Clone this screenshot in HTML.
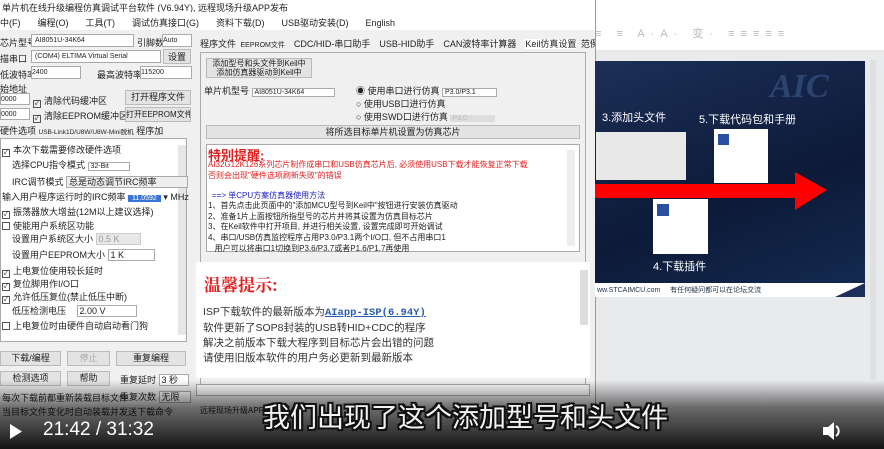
<!DOCTYPE html>
<html><head><meta charset="utf-8"><style>
*{margin:0;padding:0;box-sizing:border-box}
body{width:884px;height:449px;overflow:hidden;position:relative;background:#f0f0f0;font-family:"Liberation Sans","Noto Sans CJK SC",sans-serif;font-size:9px;color:#222}
.a{position:absolute;white-space:nowrap}
.bx{position:absolute;border:1px solid #aaa;background:#fff;white-space:nowrap;overflow:hidden;line-height:11px}
.btn{position:absolute;border:1px solid #bbb;background:#e3e3e3;text-align:center;white-space:nowrap;overflow:hidden}
.cb{display:inline-block;width:8px;height:8px;border:1px solid #555;margin-right:3px;vertical-align:-1px;font-size:7px;line-height:6px;text-align:center}
.red{color:#e02020}
</style></head><body>
<!-- left app -->
<div class="a" style="left:0;top:0;width:595px;height:12px;background:#fff"></div>
<div class="a" style="left:2px;top:1px;font-size:9px">单片机在线升级编程仿真调试平台软件 (V6.94Y), 远程现场升级APP发布</div>
<div class="a" style="left:0;top:12px;width:595px;height:18px;background:#fff"></div>
<div class="a" style="left:0;top:16px;font-size:9px;word-spacing:6px">中(F) &nbsp;编程(O) &nbsp;工具(T) &nbsp;调试仿真接口(G) &nbsp;资料下载(D) &nbsp;USB驱动安装(D) &nbsp;English</div>
<div class="a" style="left:0;top:36px">芯片型号</div>
<div class="bx" style="left:31px;top:34px;width:103px;height:13px;padding-left:3px;font-size:7px">AI8051U-34K64</div>
<div class="a" style="left:137px;top:36px">引脚数</div><div class="bx" style="left:162px;top:34px;width:30px;height:13px;font-size:7px">Auto</div>
<div class="a" style="left:0;top:52px">描串口</div>
<div class="bx" style="left:31px;top:50px;width:130px;height:13px;font-size:7px;padding-left:3px">(COM4) ELTIMA Virtual Serial</div>
<div class="btn" style="left:163px;top:49px;width:28px;height:15px">设置</div>
<div class="a" style="left:0;top:68px">低波特率</div><div class="bx" style="left:31px;top:66px;width:50px;height:13px;font-size:7px">2400</div>
<div class="a" style="left:97px;top:68px">最高波特率</div><div class="bx" style="left:140px;top:66px;width:52px;height:13px;font-size:7px">115200</div>
<div class="a" style="left:0;top:82px">始地址</div>
<div class="bx" style="left:0;top:93px;width:30px;height:12px;font-size:7px">0000</div>
<div class="a" style="left:33px;top:94px"><span class="cb">✓</span>清除代码缓冲区</div>
<div class="bx" style="left:0;top:108px;width:30px;height:12px;font-size:7px">0000</div>
<div class="a" style="left:33px;top:109px"><span class="cb">✓</span>清除EEPROM缓冲区</div>
<div class="btn" style="left:125px;top:90px;width:66px;height:15px;line-height:13px">打开程序文件</div>
<div class="btn" style="left:125px;top:107px;width:66px;height:15px;line-height:13px;font-size:8px">打开EEPROM文件</div>
<div class="a" style="left:0;top:124px">硬件选项 <span style="font-size:6.5px">USB-Link1D/U8W/U8W-Mini脱机</span> 程序加</div>
<div class="bx" style="left:0;top:138px;width:187px;height:204px"></div>
<div class="a" style="left:178px;top:145px;width:8px;height:190px;background:#e6e6e6"></div>
<div class="a" style="left:2px;top:143px"><span class="cb">✓</span>本次下载需要修改硬件选项</div>
<div class="a" style="left:12px;top:158px">选择CPU指令模式 <span style="border:1px solid #aaa;padding:0 20px 0 2px;font-size:7px">32-Bit</span></div>
<div class="a" style="left:12px;top:175px">IRC调节模式 <span style="border:1px solid #aaa;padding:0 30px 0 2px;background:#eee">总是动态调节IRC频率</span></div>
<div class="a" style="left:2px;top:190px">输入用户程序运行时的IRC频率 <span style="background:#3875d7;color:#fff;padding:0 4px;font-size:7px">11.0592</span> ▾ MHz</div>
<div class="a" style="left:2px;top:205px"><span class="cb">✓</span>振荡器放大增益(12M以上建议选择)</div>
<div class="a" style="left:2px;top:219px"><span class="cb"></span>使能用户系统区功能</div>
<div class="a" style="left:12px;top:232px">设置用户系统区大小 <span style="border:1px solid #ccc;background:#e8e8e8;padding:0 20px 0 2px;color:#999">0.5 K</span></div>
<div class="a" style="left:12px;top:248px">设置用户EEPROM大小 <span style="border:1px solid #aaa;padding:0 30px 0 2px">1 K</span></div>
<div class="a" style="left:2px;top:264px"><span class="cb">✓</span>上电复位使用较长延时</div>
<div class="a" style="left:2px;top:277px"><span class="cb">✓</span>复位脚用作I/O口</div>
<div class="a" style="left:2px;top:290px"><span class="cb">✓</span>允许低压复位(禁止低压中断)</div>
<div class="a" style="left:12px;top:304px">低压检测电压 <span style="border:1px solid #aaa;padding:0 30px 0 2px;margin-left:8px">2.00 V</span></div>
<div class="a" style="left:2px;top:319px"><span class="cb"></span>上电复位时由硬件自动启动看门狗</div>
<div class="btn" style="left:0;top:351px;width:61px;height:15px;line-height:13px">下载/编程</div>
<div class="btn" style="left:67px;top:351px;width:43px;height:15px;line-height:13px;color:#aaa">停止</div>
<div class="btn" style="left:116px;top:351px;width:70px;height:15px;line-height:13px">重复编程</div>
<div class="btn" style="left:0;top:371px;width:61px;height:15px;line-height:13px">检测选项</div>
<div class="btn" style="left:67px;top:371px;width:43px;height:15px;line-height:13px">帮助</div>
<div class="a" style="left:120px;top:373px">重复延时 <span style="border:1px solid #aaa;background:#fff;padding:0 10px 0 2px">3 秒</span></div>
<div class="a" style="left:120px;top:390px">重复次数 <span style="border:1px solid #aaa;background:#fff;padding:0 10px 0 2px">无限</span></div>
<div class="a" style="left:2px;top:391px">每次下载前都重新装载目标文件</div>
<div class="a" style="left:2px;top:405px">当目标文件变化时自动装载并发送下载命令</div>

<!-- right tab panel -->
<div class="a" style="left:200px;top:37px;word-spacing:2px">程序文件 <span style="font-size:7px">EEPROM文件</span> &nbsp;CDC/HID-串口助手 &nbsp;USB-HID助手 &nbsp;CAN波特率计算器 &nbsp;<span style="background:#fff">Keil仿真设置</span> 范例程序</div>
<div class="a" style="left:200px;top:52px;width:386px;height:336px;border:1px solid #aaa;background:#f0f0f0"></div>
<div class="btn" style="left:206px;top:58px;width:106px;height:20px;font-size:8px;line-height:9px;white-space:normal">添加型号和头文件到Keil中<br>添加仿真器驱动到Keil中</div>
<div class="a" style="left:204px;top:84px">单片机型号 <span style="border:1px solid #aaa;background:#fff;padding:0 30px 0 2px;font-size:7px">AI8051U-34K64</span></div>
<div class="a" style="left:356px;top:84px">◉ 使用串口进行仿真 <span style="border:1px solid #aaa;background:#fff;padding:0 20px 0 2px;font-size:7px">P3.0/P3.1</span></div>
<div class="a" style="left:356px;top:97px">○ 使用USB口进行仿真</div>
<div class="a" style="left:356px;top:110px">○ 使用SWD口进行仿真 <span style="background:#ddd;padding:0 28px 0 2px;color:#bbb;font-size:7px">P3.0</span></div>
<div class="btn" style="left:206px;top:125px;width:374px;height:14px;line-height:12px">将所选目标单片机设置为仿真芯片</div>
<div class="bx" style="left:206px;top:144px;width:374px;height:108px"></div>
<div class="a" style="left:567px;top:150px;width:8px;height:96px;background:#eee"></div>
<div class="a red" style="left:208px;top:145px;font-size:13px;font-weight:bold">特别提醒:</div>
<div class="a red" style="left:208px;top:159px;font-size:8px">AI32G12K126系列芯片制作成串口和USB仿真芯片后, 必须使用USB下载才能恢复正常下载</div>
<div class="a red" style="left:208px;top:170px;font-size:8px">否则会出现"硬件选项刷新失败"的错误</div>
<div class="a" style="left:212px;top:190px;font-size:8px;color:#2020c0">==> 单CPU方案仿真器使用方法</div>
<div class="a" style="left:208px;top:201px;font-size:8px;line-height:10.7px">1、首先点击此页面中的"添加MCU型号到Keil中"按钮进行安装仿真驱动<br>2、准备1片上面按钮所指型号的芯片并将其设置为仿真目标芯片<br>3、在Keil软件中打开项目, 并进行相关设置, 设置完成即可开始调试<br>4、串口/USB仿真监控程序占用P3.0/P3.1两个I/O口, 但不占用串口1<br>&nbsp;&nbsp;&nbsp;用户可以将串口1切换到P3.6/P3.7或者P1.6/P1.7再使用</div>
<div class="bx" style="left:196px;top:262px;width:394px;height:116px;border:none"></div>
<div class="a red" style="left:204px;top:271px;font-size:17px;font-family:'Noto Serif CJK SC',serif;font-weight:bold">温馨提示:</div>
<div class="a" style="left:203px;top:305px;font-size:10.5px;line-height:15px;color:#333">ISP下载软件的最新版本为<span style="color:#2a5db0;text-decoration:underline;font-weight:bold;font-family:'Liberation Mono',monospace">AIapp-ISP(6.94Y)</span><br>软件更新了SOP8封装的USB转HID+CDC的程序<br>解决之前版本下载大程序到目标芯片会出错的问题<br>请使用旧版本软件的用户务必更新到最新版本</div>
<div class="a" style="left:580px;top:270px;width:8px;height:55px;background:#ddd"></div>
<div class="bx" style="left:196px;top:384px;width:394px;height:12px"></div>
<div class="a" style="left:200px;top:405px;font-size:8px">远程现场升级APP发布</div>
<div class="a" style="left:595px;top:0;width:1px;height:420px;background:#999"></div>

<!-- ppt -->
<div class="a" style="left:596px;top:0;width:288px;height:50px;background:#fff"></div>
<div class="a" style="left:595px;top:25px;color:#bbb;font-size:11px;letter-spacing:6px">≡ ≡ A·A· 变· ≡≡≡≡≡</div>
<div class="a" style="left:596px;top:50px;width:288px;height:370px;background:#e9eaec"></div>
<div class="a" style="left:595px;top:61px;width:270px;height:222px;background:linear-gradient(160deg,#1c2f58,#0d1a38 60%,#132a50)"></div>
<div class="a" style="left:770px;top:68px;font-size:34px;color:#2c4470;font-style:italic;font-weight:bold;font-family:'Liberation Serif',serif">AIC</div>
<div class="a" style="left:602px;top:109px;color:#fff;font-size:11px">3.添加头文件</div>
<div class="a" style="left:699px;top:111px;color:#fff;font-size:11px">5.下载代码包和手册</div>
<div class="a" style="left:596px;top:132px;width:90px;height:48px;background:#e8e8e8"></div>
<div class="a" style="left:714px;top:129px;width:54px;height:54px;background:#fff"></div>
<div class="a" style="left:653px;top:199px;width:55px;height:55px;background:#fff"></div>
<div class="a" style="left:657px;top:204px;width:12px;height:12px;background:#2a4fa0"></div>
<div class="a" style="left:718px;top:134px;width:11px;height:11px;background:#2a4fa0"></div>
<div class="a" style="left:653px;top:258px;color:#fff;font-size:11px">4.下载插件</div>
<svg class="a" style="left:595px;top:170px" width="235" height="42"><path d="M0 14 H200 V2 L232 20 L200 40 V28 H0Z" fill="#f00"/></svg>
<div class="a" style="left:595px;top:283px;width:270px;height:14px;background:#fff"></div>
<div class="a" style="left:597px;top:285px;font-size:7px;color:#234">ww.STCAIMCU.com &nbsp;&nbsp;&nbsp;&nbsp;有任何疑问都可以在论坛交流</div>
<svg class="a" style="left:835px;top:283px" width="30" height="14"><path d="M0 14 L30 0 V14Z" fill="#1c2f58"/></svg>
<div class="a" style="left:870px;top:60px;width:6px;height:320px;background:#dfe0e2"></div>

<!-- video overlay -->
<div class="a" style="left:0;top:380px;width:884px;height:69px;background:linear-gradient(rgba(0,0,0,0),rgba(0,0,0,.55) 40%,rgba(0,0,0,.92))"></div>
<div class="a" style="left:263px;top:396px;font-size:27px;color:#f2f2f2;font-weight:normal;text-shadow:-2px -2px 0 #111,2px -2px 0 #111,-2px 2px 0 #111,2px 2px 0 #111,0 2px 0 #111,0 -2px 0 #111,2px 0 0 #111,-2px 0 0 #111">我们出现了这个添加型号和头文件</div>
<svg class="a" style="left:9px;top:424px" width="14" height="15"><path d="M1 0 L13 7.5 L1 15Z" fill="#fff"/></svg>
<div class="a" style="left:43px;top:419px;font-size:19px;color:#fff">21:42 / 31:32</div>
<svg class="a" style="left:822px;top:421px" width="22" height="20"><path d="M1 6 H6 L12 1 V19 L6 14 H1Z" fill="#fff"/><path d="M14 5 A6 6 0 0 1 14 15" stroke="#fff" stroke-width="2" fill="none"/></svg>
</body></html>
